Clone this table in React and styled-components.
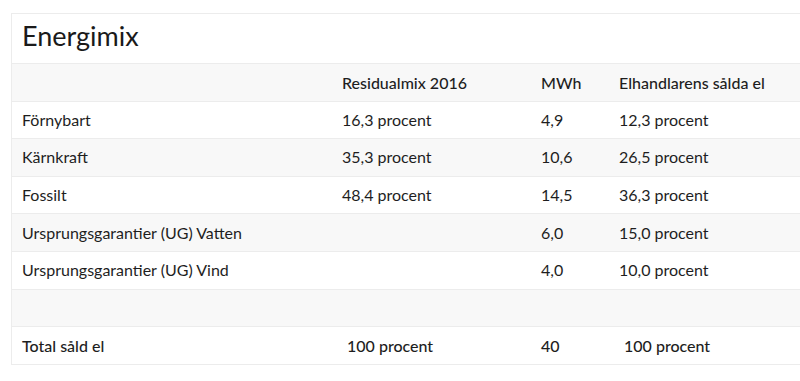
import React from "react";
import styled, { createGlobalStyle } from "styled-components";

const GlobalStyle = createGlobalStyle`
  html, body {
    margin: 0;
    padding: 0;
    background: #fff;
    overflow: hidden;
  }
  body {
    font-family: Lato, "Noto Sans", sans-serif;
    color: #1e1e1e;
  }
`;

const Page = styled.div`
  padding: 13px 0 0 11px;
  width: 789px;
  overflow: hidden;
`;

const Panel = styled.section`
  width: 830px;
  border: 1px solid #ececec;
  border-right: none;
  background: #fff;
`;

const Title = styled.h2`
  margin: 0;
  height: 49px;
  padding: 5px 0 0 10px;
  box-sizing: border-box;
  font-size: 27px;
  font-weight: 400;
  line-height: 34px;
  color: #1a1a1a;
`;

const Table = styled.table`
  width: 100%;
  border-collapse: collapse;
  table-layout: fixed;
  font-size: 16px;
`;

const Row = styled.tr`
  background: ${(p) => (p.$shaded ? "#f8f8f8" : "#fff")};
  border-top: 1px solid #ececec;
  height: 37.6px;
`;

const Cell = styled.td`
  padding: 0 10px;
  line-height: 20px;
  font-weight: ${(p) => (p.$strong ? 500 : 400)};
  white-space: nowrap;
  text-indent: ${(p) => (p.$indent ? "5px" : "0")};
`;

const HeadCell = styled.th`
  padding: 0 10px;
  text-align: left;
  font-weight: 500;
  white-space: nowrap;
`;

const rows = [
  ["Förnybart", "16,3 procent", "4,9", "12,3 procent"],
  ["Kärnkraft", "35,3 procent", "10,6", "26,5 procent"],
  ["Fossilt", "48,4 procent", "14,5", "36,3 procent"],
  ["Ursprungsgarantier (UG) Vatten", "", "6,0", "15,0 procent"],
  ["Ursprungsgarantier (UG) Vind", "", "4,0", "10,0 procent"],
  ["", "", "", ""],
];

export default function App() {
  return (
    <Page>
      <GlobalStyle />
      <Panel>
        <Title>Energimix</Title>
        <Table>
          <colgroup>
            <col style={{ width: 320 }} />
            <col style={{ width: 199 }} />
            <col style={{ width: 78 }} />
            <col />
          </colgroup>
          <thead>
            <Row $shaded>
              <HeadCell />
              <HeadCell>Residualmix 2016</HeadCell>
              <HeadCell>MWh</HeadCell>
              <HeadCell>Elhandlarens sålda el</HeadCell>
            </Row>
          </thead>
          <tbody>
            {rows.map((r, i) => (
              <Row key={i} $shaded={i % 2 === 1}>
                {r.map((c, j) => (
                  <Cell key={j}>{c}</Cell>
                ))}
              </Row>
            ))}
            <Row>
              <Cell $strong>Total såld el</Cell>
              <Cell $strong $indent>100 procent</Cell>
              <Cell $strong>40</Cell>
              <Cell $strong $indent>100 procent</Cell>
            </Row>
          </tbody>
        </Table>
      </Panel>
    </Page>
  );
}
